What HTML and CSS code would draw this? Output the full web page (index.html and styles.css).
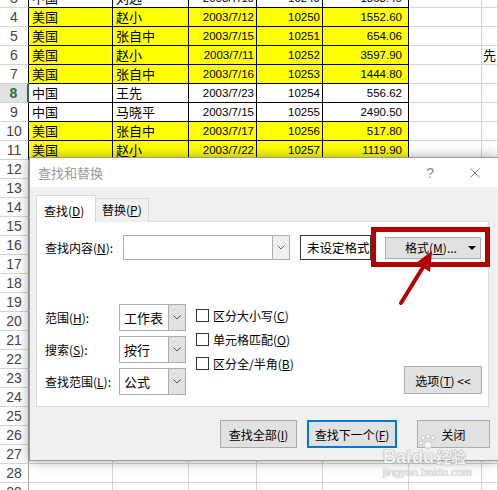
FILE: index.html
```html
<!DOCTYPE html>
<html>
<head>
<meta charset="utf-8">
<link rel="stylesheet" href="styles.css">
</head>
<body>
<div class="sheet">
  <div class="h hd">3</div><div class="c d cjk">中国</div><div class="c d cjk">刘远</div><div class="c d n">2003/7/10</div><div class="c d n">10249</div><div class="c d n acc">1863.40</div><div class="c"></div><div class="c"></div>
  <div class="h hd">4</div><div class="c d y cjk">美国</div><div class="c d y cjk">赵小</div><div class="c d y n">2003/7/12</div><div class="c d y n">10250</div><div class="c d y n acc">1552.60</div><div class="c"></div><div class="c"></div>
  <div class="h hd">5</div><div class="c d y cjk">美国</div><div class="c d y cjk">张自中</div><div class="c d y n">2003/7/15</div><div class="c d y n">10251</div><div class="c d y n acc">654.06</div><div class="c"></div><div class="c"></div>
  <div class="h hd">6</div><div class="c d y cjk">美国</div><div class="c d y cjk">赵小</div><div class="c d y n">2003/7/11</div><div class="c d y n">10252</div><div class="c d y n acc">3597.90</div><div class="c"></div><div class="c cjk g">先</div>
  <div class="h hd">7</div><div class="c d y cjk">美国</div><div class="c d y cjk">张自中</div><div class="c d y n">2003/7/16</div><div class="c d y n">10253</div><div class="c d y n acc">1444.80</div><div class="c"></div><div class="c"></div>
  <div class="h hd sel">8</div><div class="c d cjk">中国</div><div class="c d cjk">王先</div><div class="c d n">2003/7/23</div><div class="c d n">10254</div><div class="c d n acc">556.62</div><div class="c"></div><div class="c"></div>
  <div class="h hd">9</div><div class="c d cjk">中国</div><div class="c d cjk">马晓平</div><div class="c d n">2003/7/15</div><div class="c d n">10255</div><div class="c d n acc">2490.50</div><div class="c"></div><div class="c"></div>
  <div class="h hd">10</div><div class="c d y cjk">美国</div><div class="c d y cjk">张自中</div><div class="c d y n">2003/7/17</div><div class="c d y n">10256</div><div class="c d y n acc">517.80</div><div class="c"></div><div class="c"></div>
  <div class="h hd">11</div><div class="c d y cjk">美国</div><div class="c d y cjk">赵小</div><div class="c d y n">2003/7/22</div><div class="c d y n">10257</div><div class="c d y n acc">1119.90</div><div class="c"></div><div class="c"></div>
  <div class="h">12</div><div class="c"></div><div class="c"></div><div class="c"></div><div class="c"></div><div class="c"></div><div class="c"></div><div class="c"></div>
  <div class="h">13</div><div class="c"></div><div class="c"></div><div class="c"></div><div class="c"></div><div class="c"></div><div class="c"></div><div class="c"></div>
  <div class="h">14</div><div class="c"></div><div class="c"></div><div class="c"></div><div class="c"></div><div class="c"></div><div class="c"></div><div class="c"></div>
  <div class="h">15</div><div class="c"></div><div class="c"></div><div class="c"></div><div class="c"></div><div class="c"></div><div class="c"></div><div class="c"></div>
  <div class="h">16</div><div class="c"></div><div class="c"></div><div class="c"></div><div class="c"></div><div class="c"></div><div class="c"></div><div class="c"></div>
  <div class="h">17</div><div class="c"></div><div class="c"></div><div class="c"></div><div class="c"></div><div class="c"></div><div class="c"></div><div class="c"></div>
  <div class="h">18</div><div class="c"></div><div class="c"></div><div class="c"></div><div class="c"></div><div class="c"></div><div class="c"></div><div class="c"></div>
  <div class="h">19</div><div class="c"></div><div class="c"></div><div class="c"></div><div class="c"></div><div class="c"></div><div class="c"></div><div class="c"></div>
  <div class="h">20</div><div class="c"></div><div class="c"></div><div class="c"></div><div class="c"></div><div class="c"></div><div class="c"></div><div class="c"></div>
  <div class="h">21</div><div class="c"></div><div class="c"></div><div class="c"></div><div class="c"></div><div class="c"></div><div class="c"></div><div class="c"></div>
  <div class="h">22</div><div class="c"></div><div class="c"></div><div class="c"></div><div class="c"></div><div class="c"></div><div class="c"></div><div class="c"></div>
  <div class="h">23</div><div class="c"></div><div class="c"></div><div class="c"></div><div class="c"></div><div class="c"></div><div class="c"></div><div class="c"></div>
  <div class="h">24</div><div class="c"></div><div class="c"></div><div class="c"></div><div class="c"></div><div class="c"></div><div class="c"></div><div class="c"></div>
  <div class="h">25</div><div class="c"></div><div class="c"></div><div class="c"></div><div class="c"></div><div class="c"></div><div class="c"></div><div class="c"></div>
  <div class="h">26</div><div class="c"></div><div class="c"></div><div class="c"></div><div class="c"></div><div class="c"></div><div class="c"></div><div class="c"></div>
  <div class="h">27</div><div class="c"></div><div class="c"></div><div class="c"></div><div class="c"></div><div class="c"></div><div class="c"></div><div class="c"></div>
  <div class="h">28</div><div class="c"></div><div class="c"></div><div class="c"></div><div class="c"></div><div class="c"></div><div class="c"></div><div class="c"></div>
  <div class="h">29</div><div class="c"></div><div class="c"></div><div class="c"></div><div class="c"></div><div class="c"></div><div class="c"></div><div class="c"></div>
</div>

<div class="dialog">
  <div class="titlebar">
    <span class="title">查找和替换</span>
    <span class="help">?</span>
    <svg class="close" width="10" height="10" viewBox="0 0 10 10"><path d="M0.5 0.5 L9.5 9.5 M9.5 0.5 L0.5 9.5" stroke="#8a8a8a" stroke-width="1" fill="none"/></svg>
  </div>
  <div class="dbody">
    <div class="tabs">
      <div class="tab active">查找(<u>D</u>)</div>
      <div class="tab">替换(<u>P</u>)</div>
    </div>
    <div class="panel">
      <div class="findrow">
        <span class="flabel">查找内容(<u>N</u>):</span>
        <div class="combo wide">
          <span class="ctext"></span>
          <span class="carrow light"><svg width="8" height="5" viewBox="0 0 8 5"><polyline points="0.5,0.5 4,4 7.5,0.5" fill="none" stroke="#666" stroke-width="1"/></svg></span>
        </div>
        <div class="fmtbox">未设定格式</div>
        <div class="btn fmtbtn"><span>格式(<u>M</u>)...</span><svg class="tri" width="8" height="4" viewBox="0 0 8 4"><polygon points="0,0 8,0 4,4" fill="#000"/></svg></div>
      </div>
      <div class="opts">
        <div class="optgrid">
          <span class="olabel">范围(<u>H</u>):</span>
          <div class="combo"><span class="ctext">工作表</span><span class="carrow"><svg width="8" height="5" viewBox="0 0 8 5"><polyline points="0.5,0.5 4,4 7.5,0.5" fill="none" stroke="#555" stroke-width="1"/></svg></span></div>
          <span class="olabel">搜索(<u>S</u>):</span>
          <div class="combo"><span class="ctext">按行</span><span class="carrow"><svg width="8" height="5" viewBox="0 0 8 5"><polyline points="0.5,0.5 4,4 7.5,0.5" fill="none" stroke="#555" stroke-width="1"/></svg></span></div>
          <span class="olabel">查找范围(<u>L</u>):</span>
          <div class="combo"><span class="ctext">公式</span><span class="carrow"><svg width="8" height="5" viewBox="0 0 8 5"><polyline points="0.5,0.5 4,4 7.5,0.5" fill="none" stroke="#555" stroke-width="1"/></svg></span></div>
        </div>
        <div class="checks">
          <div class="chk"><span class="box"></span>区分大小写(<u>C</u>)</div>
          <div class="chk"><span class="box"></span>单元格匹配(<u>O</u>)</div>
          <div class="chk"><span class="box"></span>区分全/半角(<u>B</u>)</div>
        </div>
        <div class="btn optbtn">选项(<u>T</u>) &lt;&lt;</div>
      </div>
    </div>
    <div class="btnrow">
      <div class="btn b1">查找全部(<u>I</u>)</div>
      <div class="btn b2 def">查找下一个(<u>F</u>)</div>
      <div class="btn b3">关闭</div>
    </div>
  </div>
</div>

<div class="redbox"></div>
<svg class="arrow" width="498" height="490" viewBox="0 0 498 490">
  <line x1="401" y1="303" x2="425" y2="264" stroke="#b30000" stroke-width="4" stroke-linecap="round"/>
  <polygon points="432,251 430,272 416,263" fill="#b30000"/>
</svg>

<div class="wm">
  <svg class="paw" width="20" height="16" viewBox="0 0 20 16">
    <g fill="rgba(255,255,255,0.8)" stroke="#c8c8c8" stroke-width="1">
      <circle cx="5" cy="4" r="2"/><circle cx="10" cy="2.5" r="2"/><circle cx="15" cy="4" r="2"/><circle cx="3" cy="9" r="1.8"/>
      <ellipse cx="10" cy="11" rx="4" ry="3.5"/>
    </g>
  </svg>
  <div class="wm1"><span class="lat">Bai</span><span class="lat du">du</span><span class="jy">经验</span></div>
  <div class="wm2">jingyan.baidu.com</div>
</div>
</body>
</html>
```

FILE: styles.css
```css
html, body {
  margin: 0;
  padding: 0;
}
body {
  width: 498px;
  height: 490px;
  overflow: hidden;
  position: relative;
  background: #fff;
  font-family: "Noto Sans CJK SC", "Liberation Sans", sans-serif;
}
.sheet {
  display: grid;
  grid-template-columns: 29px 84px 76px 68px 66px 86px 73px 16px;
  grid-auto-rows: 19px;
  margin-top: -11px;
}
.h {
  box-sizing: border-box;
  border-right: 1px solid #a6a6a6;
  border-bottom: 1px solid #d4d4d4;
  font-family: "Liberation Sans", sans-serif;
  font-size: 14px;
  color: #444;
  text-align: center;
  line-height: 19px;
  background: #fff;
}
.h.hd {
  border-right-color: #000;
}
.h.sel {
  background: #e1e1e1;
  color: #217346;
  font-weight: bold;
  border-right: 2px solid #217346;
}
.c {
  box-sizing: border-box;
  border-right: 1px solid #d4d4d4;
  border-bottom: 1px solid #d4d4d4;
  font-size: 13px;
  line-height: 18px;
  padding: 0 3px;
  white-space: nowrap;
  overflow: hidden;
  color: #000;
}
.c.d {
  border-right-color: #000;
  border-bottom-color: #000;
}
.c.y {
  background: #ffff00;
}
.cjk {
  font-family: "Noto Sans CJK SC", sans-serif;
  font-size: 13px;
}
.n {
  font-family: "Liberation Sans", sans-serif;
  font-size: 11.5px;
  text-align: right;
  padding-right: 2px;
  line-height: 19px;
}
.n.acc {
  padding-right: 6px;
}
.g {
  padding-left: 1px;
  padding-right: 0;
  overflow: visible;
}

/* dialog */
.dialog {
  position: absolute;
  left: 29px;
  top: 157px;
  width: 469px;
  height: 304px;
  box-sizing: border-box;
  border: 1px solid #9a9a9a;
  border-right: none;
  background: #f0f0f0;
  box-shadow: 0 0 12px rgba(0,0,0,0.35);
  font-size: 12px;
  color: #000;
}
.titlebar {
  height: 29px;
  background: #fff;
  display: flex;
  align-items: center;
  padding-left: 8px;
}
.title {
  color: #9a9a9a;
  font-size: 13px;
}
.help {
  margin-left: auto;
  color: #8a8a8a;
  font-family: "Liberation Sans", sans-serif;
  font-size: 14px;
  margin-right: 36px;
}
.close {
  margin-right: 18px;
}
.dbody {
  padding: 9px 0 0 6px;
}
.tabs {
  display: flex;
  align-items: flex-end;
  height: 26px;
  margin-bottom: -1px;
  position: relative;
  z-index: 1;
}
.tab {
  box-sizing: border-box;
  height: 24px;
  width: 53px;
  border: 1px solid #d9d9d9;
  border-bottom: none;
  border-left: none;
  padding-left: 6px;
  line-height: 22px;
  background: #f0f0f0;
}
.tab.active {
  height: 27px;
  width: 60px;
  background: #fff;
  border-left: 1px solid #d9d9d9;
  padding-left: 7px;
  line-height: 30px;
}
.panel {
  box-sizing: border-box;
  width: 453px;
  height: 186px;
  border: 1px solid #d9d9d9;
  background: #fff;
  padding: 13px 0 0 8px;
}
.findrow {
  display: flex;
  align-items: center;
  height: 25px;
}
.flabel {
  width: 78px;
}
.combo {
  box-sizing: border-box;
  display: flex;
  width: 67px;
  height: 27px;
  border: 1px solid #adadad;
  background: #fff;
}
.combo.wide {
  width: 167px;
  height: 25px;
}
.ctext {
  flex: 1;
  padding-left: 4px;
  font-size: 13px;
  line-height: 25px;
}
.carrow {
  width: 16px;
  border-left: 1px solid #adadad;
  background: #e1e1e1;
  display: flex;
  align-items: center;
  justify-content: center;
}
.carrow.light {
  background: #f0f0f0;
}
.fmtbox {
  box-sizing: border-box;
  margin-left: 10px;
  width: 71px;
  height: 25px;
  border: 1px solid #3c3c3c;
  padding-left: 6px;
  line-height: 23px;
  font-size: 12.5px;
}
.btn {
  box-sizing: border-box;
  border: 1px solid #adadad;
  background: #e1e1e1;
  display: flex;
  align-items: center;
  justify-content: center;
}
.fmtbtn {
  margin-left: 14px;
  width: 96px;
  height: 22px;
  position: relative;
  padding-right: 4px;
}
.fmtbtn .tri {
  position: absolute;
  right: 4px;
  top: 8px;
}
.opts {
  display: flex;
  margin-top: 44px;
}
.optgrid {
  display: grid;
  grid-template-columns: 74px 67px;
  grid-auto-rows: 27px;
  row-gap: 5px;
  align-items: center;
}
.checks {
  margin-left: 10px;
  margin-top: -1px;
  display: flex;
  flex-direction: column;
}
.chk {
  height: 24px;
  display: flex;
  align-items: center;
}
.box {
  box-sizing: border-box;
  width: 13px;
  height: 13px;
  border: 1px solid #333;
  background: #fff;
  margin-right: 4px;
}
.optbtn {
  margin-left: auto;
  margin-right: 6px;
  align-self: flex-end;
  width: 78px;
  height: 28px;
  margin-bottom: 1px;
}
.btnrow {
  display: flex;
  margin-top: 13px;
  margin-left: 184px;
}
.btnrow .btn {
  height: 28px;
}
.b1 { width: 77px; }
.b2 { width: 90px; margin-left: 10px; }
.b3 { width: 73px; margin-left: 20px; }
.def {
  border: 2px solid #0078d7;
}

/* annotation */
.redbox {
  position: absolute;
  left: 371px;
  top: 227px;
  width: 119px;
  height: 40px;
  box-sizing: border-box;
  border: 5px solid #b40000;
}
.arrow {
  position: absolute;
  left: 0;
  top: 0;
}

/* watermark */
.wm {
  position: absolute;
  left: 383px;
  top: 434px;
  width: 100px;
}
.paw {
  position: absolute;
  left: 35px;
  top: 0;
}
.wm1 {
  margin-top: 13px;
  display: flex;
  align-items: baseline;
  height: 19px;
  line-height: 19px;
  color: rgba(255,255,255,0.85);
  text-shadow: 0 0 1px #aaa, 0 0 1px #aaa, 0 0 1px #aaa;
}
.lat {
  font-family: "Liberation Sans", sans-serif;
  font-weight: bold;
  font-size: 18px;
}
.du {
  margin-left: 1px;
}
.jy {
  font-size: 15px;
  font-weight: bold;
  margin-left: 2px;
}
.wm2 {
  font-family: "Liberation Sans", sans-serif;
  font-size: 11px;
  line-height: 12px;
  color: rgba(255,255,255,0.85);
  text-shadow: 0 0 1px #aaa, 0 0 1px #aaa;
}
```
